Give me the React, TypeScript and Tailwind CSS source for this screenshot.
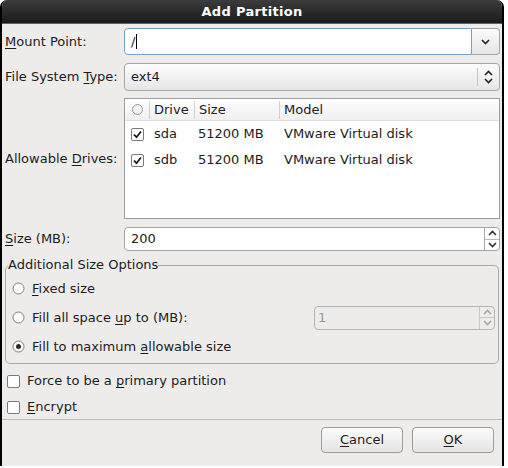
import React from 'react';

const font = "font-['DejaVu_Sans','Liberation_Sans',sans-serif]";

function U({ children }: { children: React.ReactNode }) {
    return <span className="underline underline-offset-[2px] decoration-1">{children}</span>;
}

function Check({ checked }: { checked?: boolean }) {
    return (
        <svg width="13" height="13" viewBox="0 0 13 13" className="shrink-0">
            <rect x="0.5" y="0.5" width="12" height="12" rx="1.5" fill="#fff" stroke="#7a7a7a" />
            {checked && <path d="M3 6.5 L5.5 9.2 L10 3.5" fill="none" stroke="#1a1a1a" strokeWidth="1.8" />}
        </svg>
    );
}

function Radio({ checked }: { checked?: boolean }) {
    return (
        <svg width="13" height="13" viewBox="0 0 13 13" className="shrink-0">
            <circle cx="6.5" cy="6.5" r="5.5" fill="#fff" stroke="#7a7a7a" />
            {checked && <circle cx="6.5" cy="6.5" r="2.5" fill="#2a2a2a" />}
        </svg>
    );
}

function ChevDown({ color = '#222' }: { color?: string }) {
    return (
        <svg width="9" height="6" viewBox="0 0 9 6">
            <path d="M1 1 L4.5 4.5 L8 1" fill="none" stroke={color} strokeWidth="1.6" />
        </svg>
    );
}

function ChevUp({ color = '#222' }: { color?: string }) {
    return (
        <svg width="9" height="6" viewBox="0 0 9 6">
            <path d="M1 5 L4.5 1.5 L8 5" fill="none" stroke={color} strokeWidth="1.6" />
        </svg>
    );
}

function SpinButtons({ disabled }: { disabled?: boolean }) {
    const c = disabled ? '#a8a8a8' : '#333';
    return (
        <div className={`w-[15px] flex flex-col border-l ${disabled ? 'border-[#c8c8c8]' : 'border-[#a8a8a8]'}`}>
            <div className={`flex-1 flex items-center justify-center border-b ${disabled ? 'border-[#c8c8c8]' : 'border-[#b8b8b8]'}`}>
                <ChevUp color={c} />
            </div>
            <div className="flex-1 flex items-center justify-center">
                <ChevDown color={c} />
            </div>
        </div>
    );
}

const drives = [
    { name: 'sda', size: '51200 MB', model: 'VMware Virtual disk' },
    { name: 'sdb', size: '51200 MB', model: 'VMware Virtual disk' },
];

export default function App() {
    return (
        <div className={`w-[508px] h-[468px] bg-white ${font} text-[13px] text-[#1c1c1c]`}>
            <div className="w-[504px] h-[466px] flex flex-col bg-[#edeceb] border-x-2 border-black rounded-t-[7px] overflow-hidden">

                {/* Title bar */}
                <div className="h-[24px] shrink-0 flex items-center justify-center bg-gradient-to-b from-[#3c3c3c] to-[#1a1a1a] border-b border-[#5b6470]">
                    <span className="text-white font-bold text-[13px] tracking-[0.3px]">Add Partition</span>
                </div>

                <div className="flex flex-col pl-[3px]">

                    {/* Mount point */}
                    <div className="flex items-center mt-[4px] h-[27px]">
                        <div className="w-[119px]"><U>M</U>ount Point:</div>
                        <div className="flex h-[27px] w-[376px]">
                            <div className="flex-1 flex items-center pl-[6px] bg-white border border-[#7c9dc8] rounded-l-[4px]">/<span className="w-px h-[15px] bg-black ml-px" /></div>
                            <div className="w-[28px] flex items-center justify-center bg-gradient-to-b from-[#fbfbfb] to-[#e5e5e5] border border-l-0 border-[#a4a4a4] rounded-r-[4px]">
                                <ChevDown />
                            </div>
                        </div>
                    </div>

                    {/* File system type */}
                    <div className="flex items-center mt-[8px] h-[28px]">
                        <div className="w-[119px]">File System <U>T</U>ype:</div>
                        <div className="flex items-center h-[28px] w-[376px] pl-[6px] bg-gradient-to-b from-[#fcfcfc] to-[#e6e6e6] border border-[#a4a4a4] rounded-[4px]">
                            <span className="flex-1">ext4</span>
                            <span className="w-px h-[18px] bg-[#c4c4c4]" />
                            <div className="w-[21px] flex flex-col items-center gap-[2px]">
                                <ChevUp />
                                <ChevDown />
                            </div>
                        </div>
                    </div>

                    {/* Allowable drives */}
                    <div className="flex items-center mt-[7px] h-[121px]">
                        <div className="w-[119px]">Allowable <U>D</U>rives:</div>
                        <div className="w-[376px] h-[121px] bg-white border border-[#9c9c9c] flex flex-col">
                            <div className="h-[22px] flex items-center bg-gradient-to-b from-[#ffffff] to-[#efefef] border-b border-[#dcdcdc]">
                                <div className="w-[24px] flex justify-center">
                                    <span className="w-[11px] h-[11px] rounded-full border border-[#9a9a9a] bg-[#f2f2f2]" />
                                </div>
                                <span className="w-px h-[18px] bg-[#cfcfcf]" />
                                <div className="w-[44px] pl-[4px]">Drive</div>
                                <span className="w-px h-[18px] bg-[#cfcfcf]" />
                                <div className="w-[84px] pl-[4px]">Size</div>
                                <span className="w-px h-[18px] bg-[#cfcfcf]" />
                                <div className="flex-1 pl-[4px]">Model</div>
                            </div>
                            {drives.map((d) => (
                                <div key={d.name} className="h-[26px] flex items-center">
                                    <div className="w-[24px] flex justify-center"><Check checked /></div>
                                    <div className="w-[45px] pl-[5px]">{d.name}</div>
                                    <div className="w-[85px] pl-[4px]">{d.size}</div>
                                    <div className="flex-1 pl-[5px]">{d.model}</div>
                                </div>
                            ))}
                        </div>
                    </div>

                    {/* Size */}
                    <div className="flex items-center mt-[8px] h-[24px]">
                        <div className="w-[119px]"><U>S</U>ize (MB):</div>
                        <div className="flex h-[24px] w-[376px] bg-white border border-[#a4a4a4] rounded-[4px] overflow-hidden">
                            <div className="flex-1 flex items-center pl-[6px]">200</div>
                            <SpinButtons />
                        </div>
                    </div>
                </div>

                {/* Additional size options */}
                <fieldset className="mx-[3px] mt-[6px] h-[107px] border border-[#a9a9a9] rounded-[5px] flex flex-col">
                    <legend className="ml-[2px] px-0 leading-[16px]">Additional Size Options</legend>
                    <div className="flex items-center h-[29px] pl-[6px] gap-[7px] mt-[1px]">
                        <Radio /><span><U>F</U>ixed size</span>
                    </div>
                    <div className="flex items-center h-[29px] pl-[6px] gap-[7px]">
                        <Radio /><span className="flex-1">Fill all space <U>u</U>p to (MB):</span>
                        <div className="flex h-[24px] w-[181px] mr-[3px] border border-[#b4b4b4] rounded-[4px] overflow-hidden">
                            <div className="flex-1 flex items-center pl-[3px] text-[#9a9a9a]">1</div>
                            <SpinButtons disabled />
                        </div>
                    </div>
                    <div className="flex items-center h-[29px] pl-[6px] gap-[7px]">
                        <Radio checked /><span>Fill to maximum <U>a</U>llowable size</span>
                    </div>
                </fieldset>

                {/* Check options */}
                <div className="flex items-center h-[26px] mt-[4px] pl-[5px] gap-[7px]">
                    <Check /><span>Force to be a <U>p</U>rimary partition</span>
                </div>
                <div className="flex items-center h-[24px] mt-[1px] pl-[5px] gap-[7px]">
                    <Check /><span><U>E</U>ncrypt</span>
                </div>

                <div className="h-px bg-[#bdbdbd]" />

                {/* Buttons */}
                <div className="flex justify-end gap-[9px] pr-[8px] mt-[7px]">
                    <button className="w-[82px] h-[26px] bg-gradient-to-b from-[#fbfbfb] to-[#e4e4e4] border border-[#9c9c9c] rounded-[4px]"><U>C</U>ancel</button>
                    <button className="w-[82px] h-[26px] bg-gradient-to-b from-[#fbfbfb] to-[#e4e4e4] border border-[#9c9c9c] rounded-[4px]"><U>O</U>K</button>
                </div>
            </div>
        </div>
    );
}
